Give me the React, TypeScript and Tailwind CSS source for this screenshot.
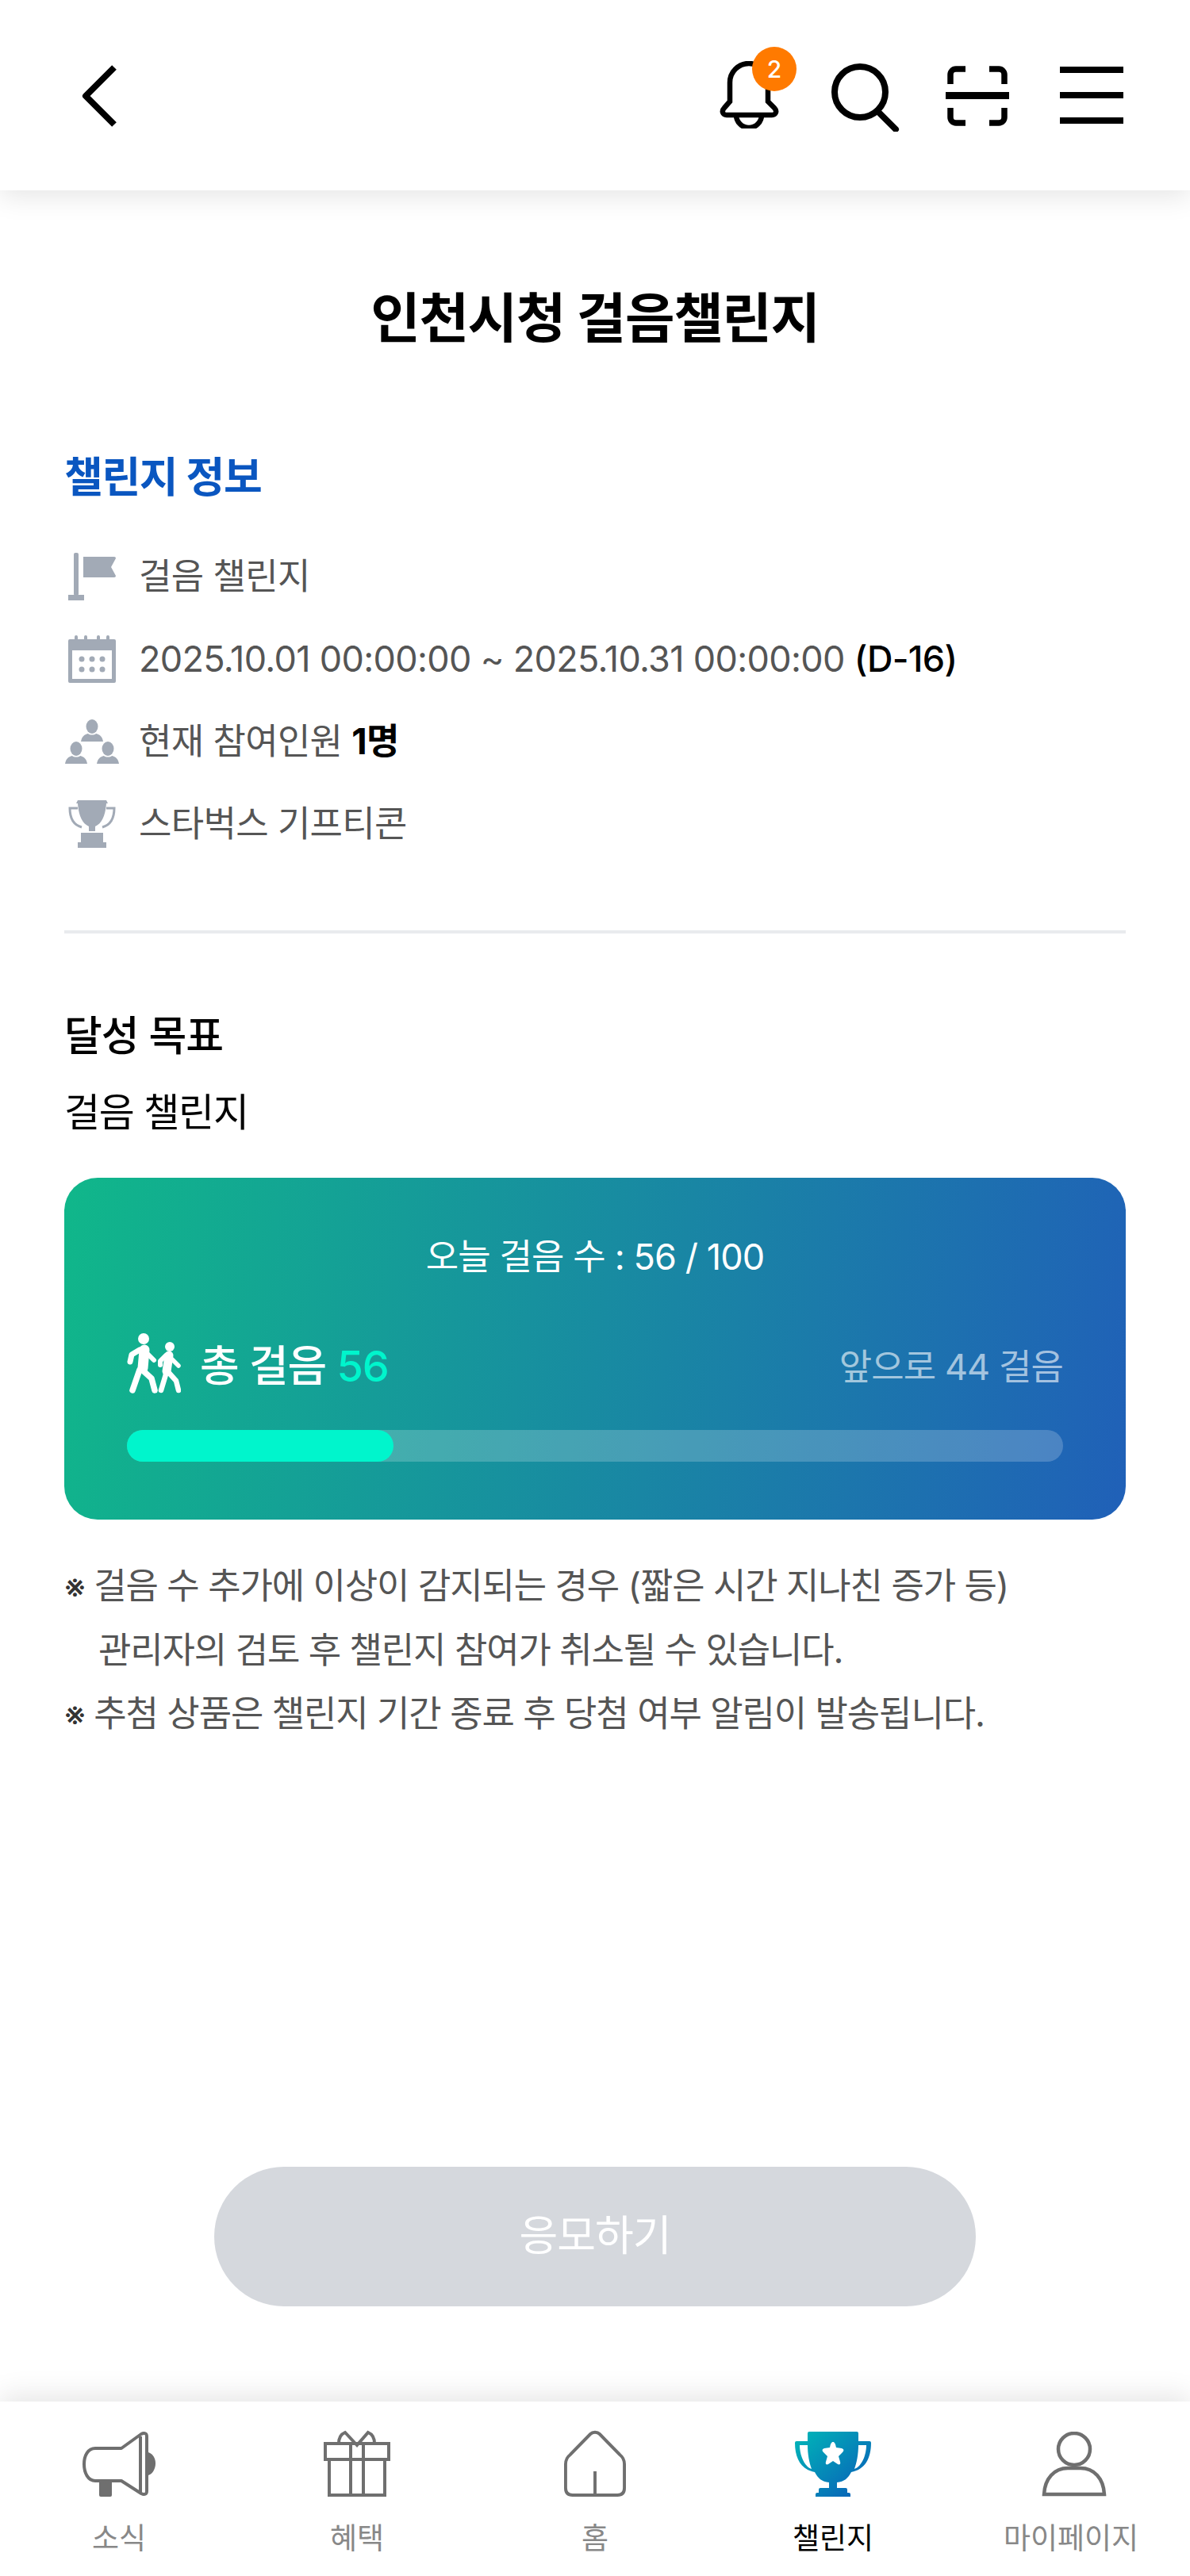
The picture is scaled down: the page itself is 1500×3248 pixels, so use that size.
import type { ReactNode } from "react";

const FONT = 'Inter, "Noto Sans CJK KR", sans-serif';

function FlagIcon() {
  return (
    <svg width="60" height="60" viewBox="0 0 60 60" fill="#a2aab6">
      <rect x="7" y="0" width="6" height="54" rx="2" />
      <rect x="0" y="53" width="20" height="7" />
      <path d="M19 5H58a2 2 0 0 1 2 2L54 18l6 11a2 2 0 0 1-2 2H19z" />
    </svg>
  );
}

function CalendarIcon() {
  return (
    <svg width="60" height="60" viewBox="0 0 60 60">
      <path
        fill="#a2aab6"
        d="M2 5h6V2a2 2 0 0 1 4 0v3h8V2a2 2 0 0 1 4 0v3h12V2a2 2 0 0 1 4 0v3h8V2a2 2 0 0 1 4 0v3h6a2 2 0 0 1 2 2v51a2 2 0 0 1-2 2H2a2 2 0 0 1-2-2V7a2 2 0 0 1 2-2z"
      />
      <rect x="5" y="19" width="50" height="36" fill="#fff" />
      {[17, 30, 43].map((x) => (
        <g key={x} fill="#a2aab6">
          <circle cx={x} cy="30" r="3.5" />
          <circle cx={x} cy="43" r="3.5" />
        </g>
      ))}
    </svg>
  );
}

function PeopleIcon() {
  const person = (x: number, y: number) => (
    <g key={`${x}-${y}`} fill="#a2aab6">
      <ellipse cx={x + 14} cy={y + 9} rx="7.5" ry="9" />
      <path d={`M${x} ${y + 28}c1-6 4-9 9-10 2 2 8 2 10 0 5 1 8 4 9 10z`} />
    </g>
  );
  return (
    <svg width="68" height="56" viewBox="0 0 68 56">
      {person(20, 0)}
      {person(0, 28)}
      {person(40, 28)}
    </svg>
  );
}

function CupIcon() {
  return (
    <svg width="60" height="60" viewBox="0 0 60 60" fill="#a2aab6">
      <path d="M12 0h36l2 4h-2c-1 14-5 25-14 29v6h-8v-6C17 29 13 18 12 4h-2z" />
      <path d="M12 10H2c0 12 4 21 15 24" fill="none" stroke="#a2aab6" strokeWidth="3" />
      <path d="M48 10h10c0 12-4 21-15 24" fill="none" stroke="#a2aab6" strokeWidth="3" />
      <rect x="16" y="41" width="28" height="12" />
      <rect x="12" y="53" width="36" height="7" />
    </svg>
  );
}

function WalkIcon() {
  return (
    <svg width="68" height="76" viewBox="0 0 68 76" className="mt-[-6px]">
      <circle cx="21" cy="7" r="7" fill="#fff" />
      <circle cx="54" cy="17" r="6" fill="#fff" />
      <g fill="none" stroke="#fff" strokeLinecap="round" strokeLinejoin="round">
        <path d="M22 21 20 44" strokeWidth="13" />
        <path d="M16 21 6 27 4 36" strokeWidth="7" />
        <path d="M25 25 34 34" strokeWidth="6" />
        <path d="M16 46 7 72" strokeWidth="7.5" />
        <path d="M20 47 31 57 35 72" strokeWidth="7.5" />
        <path d="M53 28 50 48" strokeWidth="11" />
        <path d="M49 28 42 35 42 40" strokeWidth="6" />
        <path d="M57 33 65 41" strokeWidth="5.5" />
        <path d="M49 52 43 72" strokeWidth="6.5" />
        <path d="M53 50 62 60 65 72" strokeWidth="6.5" />
      </g>
    </svg>
  );
}

function NavItem({
  label,
  active,
  icon,
}: {
  label: string;
  active?: boolean;
  icon: ReactNode;
}) {
  return (
    <div className="flex flex-col items-center">
      <div className="h-[84px] flex items-end justify-center">{icon}</div>
      <span
        className={`mt-[26px] text-[37px] leading-[54px] ${
          active ? "text-black" : "text-[#888888]"
        }`}
      >
        {label}
      </span>
    </div>
  );
}

export default function App() {
  return (
    <div
      className="w-full h-[3248px] flex flex-col bg-white overflow-hidden"
      style={{ fontFamily: FONT }}
    >
      {/* 상단 헤더 */}
      <header className="relative z-10 h-[240px] shrink-0 bg-white shadow-[0_8px_32px_rgba(0,0,0,0.1)] flex items-start justify-between pl-[103px] pr-[84px] pt-[77px]">
        <svg width="44" height="78" viewBox="0 0 44 78" className="mt-[5px]">
          <path
            d="M41 3 5 39l36 36"
            fill="none"
            stroke="#000"
            strokeWidth="8"
            strokeLinejoin="round"
          />
        </svg>
        <div className="flex items-start">
          <div className="relative w-[75px] h-[85px]">
            <svg width="75" height="85" viewBox="0 0 75 85">
              <path
                d="M13 51V27a24 24 0 0 1 48 0v24l8 8c4 4 2 9-3 9H9c-5 0-7-5-3-9z"
                fill="none"
                stroke="#000"
                strokeWidth="6.5"
              />
              <path
                d="M21 68a16 16 0 0 0 32 0"
                fill="none"
                stroke="#000"
                strokeWidth="6.5"
              />
            </svg>
            <span className="absolute left-[41px] top-[-18px] w-[56px] h-[56px] rounded-full bg-[#ff7a00] text-white text-[30px] font-medium flex items-center justify-center">
              2
            </span>
          </div>
          <svg width="86" height="86" viewBox="0 0 86 86" className="ml-[66px] mt-[3px]">
            <circle cx="36" cy="36" r="32" fill="none" stroke="#000" strokeWidth="8" />
            <path d="M58 60 81 83" stroke="#000" strokeWidth="8" strokeLinecap="round" />
          </svg>
          <svg width="80" height="76" viewBox="0 0 80 76" className="ml-[58px] mt-[6px]">
            <g fill="none" stroke="#000" strokeWidth="7.5">
              <path d="M6 23V11a7 7 0 0 1 7-7h12" />
              <path d="M55 4h12a7 7 0 0 1 7 7v12" />
              <path d="M6 53v12a7 7 0 0 0 7 7h12" />
              <path d="M55 72h12a7 7 0 0 0 7-7V53" />
            </g>
            <rect x="0" y="33" width="80" height="9" />
          </svg>
          <div className="ml-[64px] mt-[7px] w-[80px] h-[72px] flex flex-col justify-between">
            <div className="h-[8px] bg-black" />
            <div className="h-[8px] bg-black" />
            <div className="h-[8px] bg-black" />
          </div>
        </div>
      </header>

      {/* 본문 */}
      <main className="flex-1 flex flex-col px-[81px] pt-[123px]">
        <h1 className="text-center text-[68px] leading-[76px] font-bold tracking-[-0.02em] text-black">
          인천시청 걸음챌린지
        </h1>
        <h2 className="mt-[133px] text-[53px] leading-[60px] font-bold tracking-[-0.025em] text-[#0a56c0]">
          챌린지 정보
        </h2>
        <ul className="mt-[65px] flex flex-col gap-[44px] text-[45px] leading-[60px] tracking-[-0.015em] text-[#555555]">
          <li className="flex items-center h-[60px]">
            <div className="w-[94px] shrink-0 pl-[5px]">
              <FlagIcon />
            </div>
            걸음 챌린지
          </li>
          <li className="flex items-center h-[60px]">
            <div className="w-[94px] shrink-0 pl-[5px]">
              <CalendarIcon />
            </div>
            <span>
              2025.10.01 00:00:00 ~ 2025.10.31 00:00:00{" "}
              <span className="font-medium text-black">(D-16)</span>
            </span>
          </li>
          <li className="flex items-center h-[60px]">
            <div className="w-[94px] shrink-0 pl-[1px]">
              <PeopleIcon />
            </div>
            <span>
              현재 참여인원 <span className="font-bold text-black">1명</span>
            </span>
          </li>
          <li className="flex items-center h-[60px]">
            <div className="w-[94px] shrink-0 pl-[5px]">
              <CupIcon />
            </div>
            스타벅스 기프티콘
          </li>
        </ul>

        <div className="mt-[104px] h-[4px] bg-[#e9ebee]" />

        <h3 className="mt-[100px] text-[52px] leading-[60px] font-medium tracking-[-0.02em] text-black">
          달성 목표
        </h3>
        <p className="mt-[36px] text-[49px] leading-[60px] tracking-[-0.025em] text-black">
          걸음 챌린지
        </p>

        {/* 걸음 카드 */}
        <div className="mt-[52px] h-[431px] rounded-[42px] bg-[linear-gradient(100deg,#10b78a_0%,#2060b8_100%)] px-[79px] pt-[70px]">
          <p className="text-center text-[45px] leading-[60px] tracking-[-0.02em] text-white">
            오늘 걸음 수 : 56 / 100
          </p>
          <div className="mt-[67px] flex items-center justify-between h-[80px]">
            <div className="flex items-center">
              <WalkIcon />
              <span className="ml-[24px] text-[54px] font-medium tracking-[-0.02em] text-white">
                총 걸음 <span className="text-[#00f5cc]">56</span>
              </span>
            </div>
            <span className="mt-[4px] text-[45px] tracking-[-0.02em] text-white/60">
              앞으로 44 걸음
            </span>
          </div>
          <div className="mt-[41px] h-[40px] rounded-full bg-white/20">
            <div className="w-[336px] h-full rounded-full bg-[#00f5cc]" />
          </div>
        </div>

        {/* 유의사항 */}
        <div className="mt-[44px] text-[45px] leading-[80px] tracking-[-0.025em] text-[#555555]">
          <p>
            <span className="text-[42px] text-[#333333]">※</span> 걸음 수 추가에 이상이 감지되는 경우 (짧은 시간 지나친 증가 등)
          </p>
          <p className="pl-[43px]">관리자의 검토 후 챌린지 참여가 취소될 수 있습니다.</p>
          <p>
            <span className="text-[42px] text-[#333333]">※</span> 추첨 상품은 챌린지 기간 종료 후 당첨 여부 알림이 발송됩니다.
          </p>
        </div>

        <div className="mt-auto mb-[120px] flex justify-center">
          <button className="w-[960px] h-[176px] rounded-full bg-[#d5d8dd] text-white text-[53px] tracking-[-0.02em]">
            응모하기
          </button>
        </div>
      </main>

      {/* 하단 탭 */}
      <nav className="relative z-10 h-[220px] shrink-0 bg-white shadow-[0_-8px_32px_rgba(0,0,0,0.1)] grid grid-cols-5 pt-[36px]">
        <NavItem
          label="소식"
          icon={
            <svg width="92" height="82" viewBox="0 0 92 82">
              <path d="M83 26c6 2 9 8 9 14s-3 13-9 15z" fill="#6f6f6f" />
              <rect x="21" y="60" width="16" height="22" rx="2" fill="#6f6f6f" />
              <path
                d="M16 21H49L74 3c4-2 7-1 7 3v69c0 4-3 5-7 3L49 62H16C7 62 2 52 2 41S7 21 16 21z"
                fill="#fff"
                stroke="#6f6f6f"
                strokeWidth="4"
                strokeLinejoin="round"
              />
              <path d="M73 6v70" stroke="#6f6f6f" strokeWidth="4" />
            </svg>
          }
        />
        <NavItem
          label="혜택"
          icon={
            <svg width="84" height="84" viewBox="0 0 84 84">
              <g fill="none" stroke="#6f6f6f" strokeWidth="4">
                <path d="M19 17c0-7 3-12 8-14l15 16 14-16c5 2 8 7 8 14" />
                <rect x="2" y="17" width="80" height="20" />
                <rect x="7" y="37" width="70" height="45" />
                <path d="M34 17v65M50 17v65" />
              </g>
            </svg>
          }
        />
        <NavItem
          label="홈"
          icon={
            <svg width="78" height="84" viewBox="0 0 80 84" preserveAspectRatio="none">
              <path
                d="M34 5c3-3 9-3 12 0l26 26c4 3 6 6 6 12v30c0 6-3 9-9 9H11c-6 0-9-3-9-9V43c0-6 2-9 6-12zM40 52v30"
                fill="none"
                stroke="#6f6f6f"
                strokeWidth="4"
              />
            </svg>
          }
        />
        <NavItem
          label="챌린지"
          active
          icon={
            <svg width="96" height="82" viewBox="0 0 96 82">
              <defs>
                <linearGradient id="cup" x1="0" y1="0" x2="1" y2="1">
                  <stop offset="0%" stopColor="#00b8b8" />
                  <stop offset="100%" stopColor="#0a56b8" />
                </linearGradient>
              </defs>
              <path
                fill="url(#cup)"
                fillRule="evenodd"
                d="M16 2a2 2 0 0 1 2-2h60a2 2 0 0 1 2 2v10h14a2 2 0 0 1 2 2c0 20-8 34-25 37-4 8-9 12-18 13v7h11a2 2 0 0 1 2 2v4h2a2 2 0 0 1 2 2v7a2 2 0 0 1-2 2H28a2 2 0 0 1-2-2v-7a2 2 0 0 1 2-2h2v-4a2 2 0 0 1 2-2h11v-7c-9-1-14-5-18-13C8 48 0 34 0 14a2 2 0 0 1 2-2h14zM6 17c0 13 6 27 15 30-3-8-5-19-5-30zM80 17c0 11-2 22-5 30 9-3 15-17 15-30z"
              />
              <path
                fill="#fff"
                d="M48 13c2 0 3 2 4 7l7 1c3 1 3 3 1 5l-5 5 2 7c1 3-1 4-3 3l-6-4-6 4c-2 1-4 0-3-3l2-7-5-5c-2-2-2-4 1-5l7-1c1-5 2-7 4-7z"
              />
            </svg>
          }
        />
        <NavItem
          label="마이페이지"
          icon={
            <svg width="82" height="82" viewBox="0 0 82 82" className="ml-[8px]">
              <g fill="none" stroke="#6f6f6f" strokeWidth="4.5">
                <ellipse cx="41" cy="22" rx="20" ry="20" />
                <path d="M3 79c1-20 13-33 30-33h16c17 0 29 13 30 33z" />
              </g>
            </svg>
          }
        />
      </nav>
    </div>
  );
}
